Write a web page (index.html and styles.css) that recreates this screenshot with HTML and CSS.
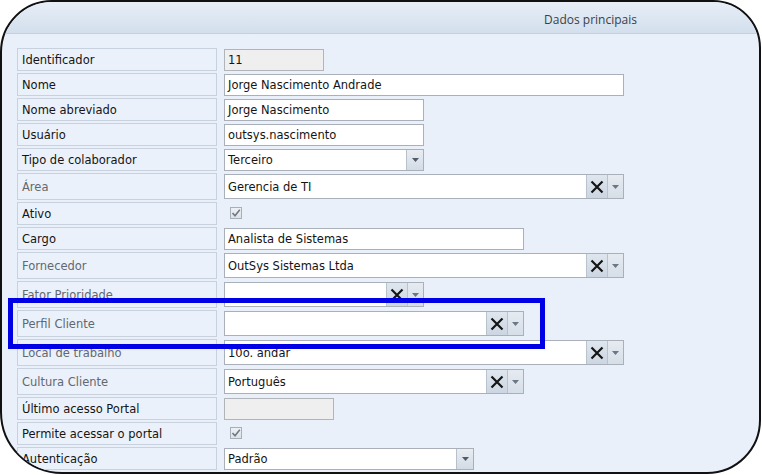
FILE: index.html
```html
<!DOCTYPE html>
<html lang="pt">
<head>
<meta charset="utf-8">
<title>Dados principais</title>
<link rel="stylesheet" href="styles.css">
</head>
<body>
<div class="panel">
  <div class="header">Dados principais</div>
  <div class="form">
    <div class="row">
      <div class="lbl">Identificador</div>
      <div class="field"><div class="inp ro w100">11</div></div>
    </div>
    <div class="row">
      <div class="lbl">Nome</div>
      <div class="field"><div class="inp w400">Jorge Nascimento Andrade</div></div>
    </div>
    <div class="row">
      <div class="lbl">Nome abreviado</div>
      <div class="field"><div class="inp w200">Jorge Nascimento</div></div>
    </div>
    <div class="row">
      <div class="lbl">Usuário</div>
      <div class="field"><div class="inp w200">outsys.nascimento</div></div>
    </div>
    <div class="row">
      <div class="lbl">Tipo de colaborador</div>
      <div class="field">
        <div class="combo w200">
          <div class="txt">Terceiro</div>
          <div class="dd"><svg width="7" height="4" viewBox="0 0 7 4"><polygon points="0,0 7,0 3.5,4" fill="#4f5c6b"/></svg></div>
        </div>
      </div>
    </div>
    <div class="row tall">
      <div class="lbl dim">Área</div>
      <div class="field">
        <div class="lookup w400">
          <div class="txt">Gerencia de TI</div>
          <div class="xbtn"><svg width="14" height="14" viewBox="0 0 14 14"><path d="M1.5 1.5 L12.5 12.5 M12.5 1.5 L1.5 12.5" stroke="#151515" stroke-width="2.2" fill="none"/></svg></div>
          <div class="arr"><svg width="7" height="4" viewBox="0 0 7 4"><polygon points="0,0 7,0 3.5,4" fill="#6a7787"/></svg></div>
        </div>
      </div>
    </div>
    <div class="row">
      <div class="lbl">Ativo</div>
      <div class="field"><div class="chk"><svg width="10" height="10" viewBox="0 0 10 10"><path d="M1.5 5 L4 7.8 L8.8 1.8" stroke="#6f7985" stroke-width="1.6" fill="none"/></svg></div></div>
    </div>
    <div class="row">
      <div class="lbl">Cargo</div>
      <div class="field"><div class="inp w300">Analista de Sistemas</div></div>
    </div>
    <div class="row tall">
      <div class="lbl dim">Fornecedor</div>
      <div class="field">
        <div class="lookup w400">
          <div class="txt">OutSys Sistemas Ltda</div>
          <div class="xbtn"><svg width="14" height="14" viewBox="0 0 14 14"><path d="M1.5 1.5 L12.5 12.5 M12.5 1.5 L1.5 12.5" stroke="#151515" stroke-width="2.2" fill="none"/></svg></div>
          <div class="arr"><svg width="7" height="4" viewBox="0 0 7 4"><polygon points="0,0 7,0 3.5,4" fill="#6a7787"/></svg></div>
        </div>
      </div>
    </div>
    <div class="row tall">
      <div class="lbl dim">Fator Prioridade</div>
      <div class="field">
        <div class="lookup w200">
          <div class="txt"></div>
          <div class="xbtn"><svg width="14" height="14" viewBox="0 0 14 14"><path d="M1.5 1.5 L12.5 12.5 M12.5 1.5 L1.5 12.5" stroke="#151515" stroke-width="2.2" fill="none"/></svg></div>
          <div class="arr"><svg width="7" height="4" viewBox="0 0 7 4"><polygon points="0,0 7,0 3.5,4" fill="#6a7787"/></svg></div>
        </div>
      </div>
    </div>
    <div class="row tall">
      <div class="lbl dim">Perfil Cliente</div>
      <div class="field">
        <div class="lookup w300">
          <div class="txt"></div>
          <div class="xbtn"><svg width="14" height="14" viewBox="0 0 14 14"><path d="M1.5 1.5 L12.5 12.5 M12.5 1.5 L1.5 12.5" stroke="#151515" stroke-width="2.2" fill="none"/></svg></div>
          <div class="arr"><svg width="7" height="4" viewBox="0 0 7 4"><polygon points="0,0 7,0 3.5,4" fill="#6a7787"/></svg></div>
        </div>
      </div>
    </div>
    <div class="row tall">
      <div class="lbl dim">Local de trabalho</div>
      <div class="field">
        <div class="lookup w400">
          <div class="txt">10o. andar</div>
          <div class="xbtn"><svg width="14" height="14" viewBox="0 0 14 14"><path d="M1.5 1.5 L12.5 12.5 M12.5 1.5 L1.5 12.5" stroke="#151515" stroke-width="2.2" fill="none"/></svg></div>
          <div class="arr"><svg width="7" height="4" viewBox="0 0 7 4"><polygon points="0,0 7,0 3.5,4" fill="#6a7787"/></svg></div>
        </div>
      </div>
    </div>
    <div class="row tall">
      <div class="lbl dim">Cultura Cliente</div>
      <div class="field">
        <div class="lookup w300">
          <div class="txt">Português</div>
          <div class="xbtn"><svg width="14" height="14" viewBox="0 0 14 14"><path d="M1.5 1.5 L12.5 12.5 M12.5 1.5 L1.5 12.5" stroke="#151515" stroke-width="2.2" fill="none"/></svg></div>
          <div class="arr"><svg width="7" height="4" viewBox="0 0 7 4"><polygon points="0,0 7,0 3.5,4" fill="#6a7787"/></svg></div>
        </div>
      </div>
    </div>
    <div class="row">
      <div class="lbl">Último acesso Portal</div>
      <div class="field"><div class="inp ro w110"></div></div>
    </div>
    <div class="row">
      <div class="lbl">Permite acessar o portal</div>
      <div class="field"><div class="chk"><svg width="10" height="10" viewBox="0 0 10 10"><path d="M1.5 5 L4 7.8 L8.8 1.8" stroke="#6f7985" stroke-width="1.6" fill="none"/></svg></div></div>
    </div>
    <div class="row">
      <div class="lbl">Autenticação</div>
      <div class="field">
        <div class="combo w250">
          <div class="txt">Padrão</div>
          <div class="dd"><svg width="7" height="4" viewBox="0 0 7 4"><polygon points="0,0 7,0 3.5,4" fill="#4f5c6b"/></svg></div>
        </div>
      </div>
    </div>
  </div>
</div>
<div class="highlight"></div>
</body>
</html>
```

FILE: styles.css
```css
html, body {
  margin: 0;
  padding: 0;
  background: #ffffff;
}

body {
  position: relative;
  width: 762px;
  height: 475px;
  overflow: hidden;
  font-family: "DejaVu Sans", Verdana, sans-serif;
  font-size: 11.5px;
  color: #1c1c1c;
}

.panel {
  box-sizing: border-box;
  width: 761px;
  height: 474px;
  border: 2px solid #111111;
  border-radius: 52px 48px 54px 62px;
  overflow: hidden;
  background: #e9f0fa;
}

.header {
  height: 31px;
  line-height: 35px;
  border-bottom: 1px solid #c2d0e1;
  background: linear-gradient(#e7eef7, #d3dfed);
  font-family: "Open Sans", "DejaVu Sans", sans-serif;
  font-size: 12px;
  color: #3a3f46;
  text-align: right;
  padding-right: 122px;
}

.form {
  padding: 14px 0 0 15px;
  display: flex;
  flex-direction: column;
  gap: 2px;
}

.row {
  display: flex;
  gap: 7px;
  height: 23px;
}

.row.tall {
  height: 27px;
}

.lbl {
  box-sizing: border-box;
  width: 200px;
  height: 100%;
  border: 1px solid #c7d2de;
  background: #ebf1fa;
  padding-left: 4px;
  line-height: 22px;
  color: #141414;
  white-space: nowrap;
}

.row.tall .lbl {
  line-height: 26px;
}

.lbl.dim {
  color: #62686f;
}

.field {
  padding-top: 1px;
}

.inp {
  box-sizing: border-box;
  height: 22px;
  border: 1px solid #a9b0b9;
  background: #ffffff;
  padding-left: 3px;
  line-height: 21px;
  color: #141414;
  white-space: nowrap;
}

.inp.ro {
  background: #efefef;
  border-color: #b1b5ba;
}

.w100 { width: 100px; }
.w110 { width: 110px; }
.w200 { width: 200px; }
.w250 { width: 250px; }
.w300 { width: 300px; }
.w400 { width: 400px; }

.combo {
  box-sizing: border-box;
  height: 22px;
  border: 1px solid #a9b0b9;
  background: #ffffff;
  display: flex;
}

.combo .txt {
  flex: 1;
  padding-left: 3px;
  line-height: 21px;
  white-space: nowrap;
  color: #141414;
}

.combo .dd {
  width: 16px;
  border-left: 1px solid #b8c1cb;
  background: linear-gradient(#e9edf2, #d3dbe4);
  display: flex;
  align-items: center;
  justify-content: center;
}

.lookup {
  box-sizing: border-box;
  height: 25px;
  border: 1px solid #a9b0b9;
  background: #ffffff;
  display: flex;
}

.lookup .txt {
  flex: 1;
  padding-left: 3px;
  line-height: 24px;
  white-space: nowrap;
  color: #141414;
}

.lookup .xbtn {
  width: 20px;
  border-left: 1px solid #b9c3ce;
  background: linear-gradient(#dfe6ee, #ccd6e2);
  display: flex;
  align-items: center;
  justify-content: center;
}

.lookup .arr {
  width: 15px;
  border-left: 1px solid #b9c3ce;
  background: linear-gradient(#e6ebf1, #d6dee7);
  display: flex;
  align-items: center;
  justify-content: center;
}

.chk {
  box-sizing: border-box;
  width: 12px;
  height: 12px;
  margin: 4px 0 0 6px;
  border: 1px solid #a7afb9;
  background: linear-gradient(#eef1f4, #dde2e8);
  display: flex;
  align-items: center;
  justify-content: center;
}

.highlight {
  position: absolute;
  left: 8px;
  top: 298px;
  width: 537px;
  height: 51px;
  box-sizing: border-box;
  border: 5px solid #0000e6;
}
```
